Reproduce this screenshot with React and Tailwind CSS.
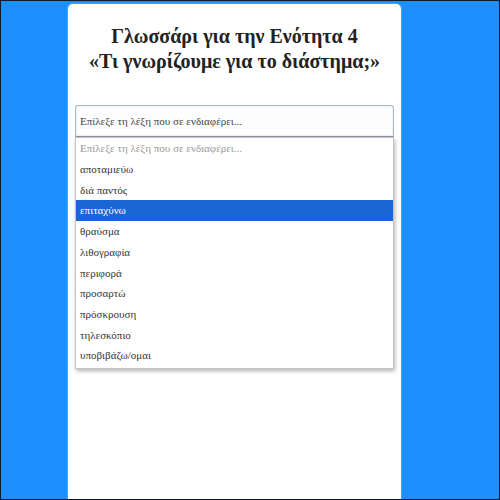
import { useState } from 'react'

const words = [
  'αποταμιεύω',
  'διά παντός',
  'επιταχύνω',
  'θραύσμα',
  'λιθογραφία',
  'περιφορά',
  'προσαρτώ',
  'πρόσκρουση',
  'τηλεσκόπιο',
  'υποβιβάζω/ομαι',
]

const placeholder = 'Επίλεξε τη λέξη που σε ενδιαφέρει...'

export default function App() {
  const [selected, setSelected] = useState('επιταχύνω')

  return (
    <div className="w-[500px] h-[500px] bg-[#1e8fff] border border-[#0c1a33] flex pl-[67px] pt-[3px] overflow-hidden font-['Liberation_Serif','Times_New_Roman',serif]">
      <div className="w-[333px] bg-white rounded-t-[5px] shadow-[0_0_2px_rgba(255,255,255,0.6)] px-[7px] pt-[20px]">
        <h1 className="text-center text-[20px] leading-[25px] font-bold text-[#222]">
          Γλωσσάρι για την Ενότητα 4
          <br />
          «Τι γνωρίζουμε για το διάστημα;»
        </h1>

        <div className="mt-[31px]">
          <div className="h-[32px] border border-[#aeb8c4] border-b-[#8d97a3] rounded-t-[3px] bg-[#fdfdfd] flex items-center px-[4px] text-[11px] text-[#444] shadow-[inset_0_0_2px_rgba(120,150,190,0.35)]">
            {placeholder}
          </div>

          <ul className="border border-[#c4c4c4] bg-white shadow-[1px_2px_4px_rgba(0,0,0,0.3)] pb-[2px]">
            <li className="h-[21px] flex items-center px-[4px] text-[11px] text-[#9a9a9a]">
              {placeholder}
            </li>
            {words.map((word) => (
              <li
                key={word}
                onClick={() => setSelected(word)}
                className={`h-[20.7px] flex items-center px-[4px] text-[11px] cursor-default ${
                  selected === word ? 'bg-[#1a66d6] text-white' : 'text-[#333]'
                }`}
              >
                {word}
              </li>
            ))}
          </ul>
        </div>
      </div>
    </div>
  )
}
